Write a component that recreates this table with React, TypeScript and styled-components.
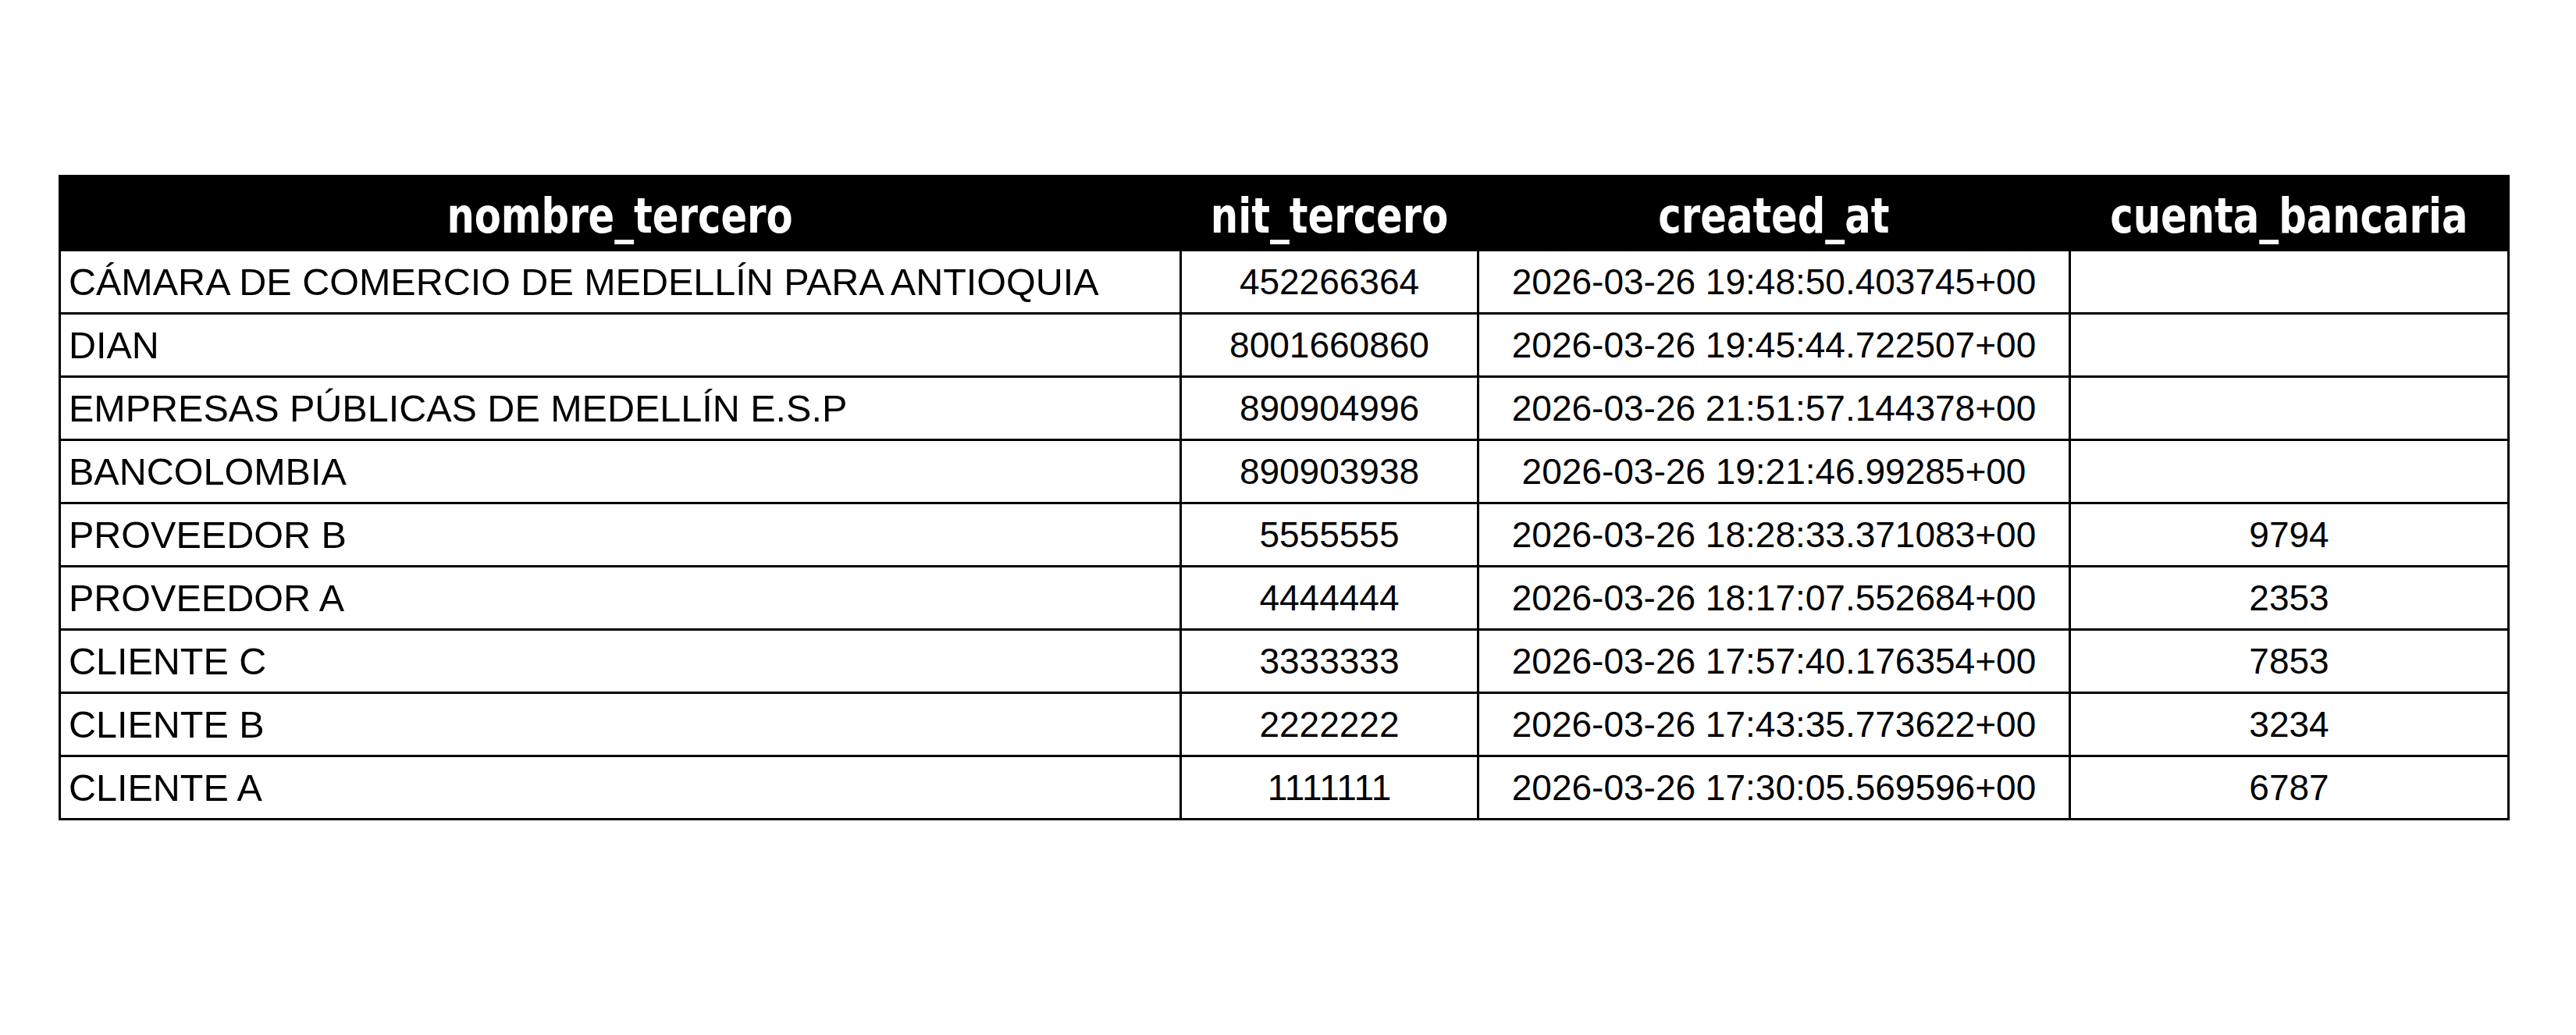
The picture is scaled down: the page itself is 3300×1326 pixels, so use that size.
import styled, { createGlobalStyle } from 'styled-components'

const GlobalStyle = createGlobalStyle`
  html, body {
    margin: 0;
    padding: 0;
    background: #ffffff;
  }
  body {
    font-family: "Liberation Sans", Arial, sans-serif;
    color: #000000;
  }
`

interface Tercero {
  nombre: string
  nit: string
  createdAt: string
  cuenta?: string
}

const rows: Tercero[] = [
  { nombre: 'CÁMARA DE COMERCIO DE MEDELLÍN PARA ANTIOQUIA', nit: '452266364', createdAt: '2026-03-26 19:48:50.403745+00' },
  { nombre: 'DIAN', nit: '8001660860', createdAt: '2026-03-26 19:45:44.722507+00' },
  { nombre: 'EMPRESAS PÚBLICAS DE MEDELLÍN E.S.P', nit: '890904996', createdAt: '2026-03-26 21:51:57.144378+00' },
  { nombre: 'BANCOLOMBIA', nit: '890903938', createdAt: '2026-03-26 19:21:46.99285+00' },
  { nombre: 'PROVEEDOR B', nit: '5555555', createdAt: '2026-03-26 18:28:33.371083+00', cuenta: '9794' },
  { nombre: 'PROVEEDOR A', nit: '4444444', createdAt: '2026-03-26 18:17:07.552684+00', cuenta: '2353' },
  { nombre: 'CLIENTE C', nit: '3333333', createdAt: '2026-03-26 17:57:40.176354+00', cuenta: '7853' },
  { nombre: 'CLIENTE B', nit: '2222222', createdAt: '2026-03-26 17:43:35.773622+00', cuenta: '3234' },
  { nombre: 'CLIENTE A', nit: '1111111', createdAt: '2026-03-26 17:30:05.569596+00', cuenta: '6787' },
]

const Page = styled.div`
  padding: 224px 0 0 75px;
`

const Sheet = styled.table`
  border-collapse: collapse;
  table-layout: fixed;
  width: 3137px;
`

const HeaderCell = styled.th`
  height: 95px;
  padding: 8px 0 0;
  box-sizing: border-box;
  background: #000000;
  color: #ffffff;
  border: 3px solid #000000;
  font-family: "DejaVu Sans Condensed", "Liberation Sans", sans-serif;
  font-stretch: condensed;
  font-weight: 700;
  font-size: 62px;
  line-height: 1;
  text-align: center;
  vertical-align: middle;
  white-space: nowrap;
`

const HeaderLabel = styled.span`
  display: inline-block;
  transform: scaleX(0.89);
`

const BodyRow = styled.tr`
  height: 81px;
`

const Cell = styled.td<{ $align?: 'left' | 'center' }>`
  border: 3px solid #000000;
  padding: 0 ${p => (p.$align === 'left' ? '10px' : '0')};
  font-family: "Liberation Sans", Arial, sans-serif;
  font-size: ${p => (p.$align === 'left' ? '48.5px' : '46px')};
  line-height: 1;
  text-align: ${p => p.$align ?? 'center'};
  vertical-align: middle;
  white-space: nowrap;
`

const headers = ['nombre_tercero', 'nit_tercero', 'created_at', 'cuenta_bancaria']

export default function App() {
  return (
    <Page>
      <GlobalStyle />
      <Sheet>
        <colgroup>
          <col style={{ width: 1436 }} />
          <col style={{ width: 381 }} />
          <col style={{ width: 758 }} />
          <col style={{ width: 562 }} />
        </colgroup>
        <thead>
          <tr>
            {headers.map(h => (
              <HeaderCell key={h}>
                <HeaderLabel>{h}</HeaderLabel>
              </HeaderCell>
            ))}
          </tr>
        </thead>
        <tbody>
          {rows.map(r => (
            <BodyRow key={r.nit}>
              <Cell $align="left">{r.nombre}</Cell>
              <Cell>{r.nit}</Cell>
              <Cell>{r.createdAt}</Cell>
              <Cell>{r.cuenta ?? ''}</Cell>
            </BodyRow>
          ))}
        </tbody>
      </Sheet>
    </Page>
  )
}
